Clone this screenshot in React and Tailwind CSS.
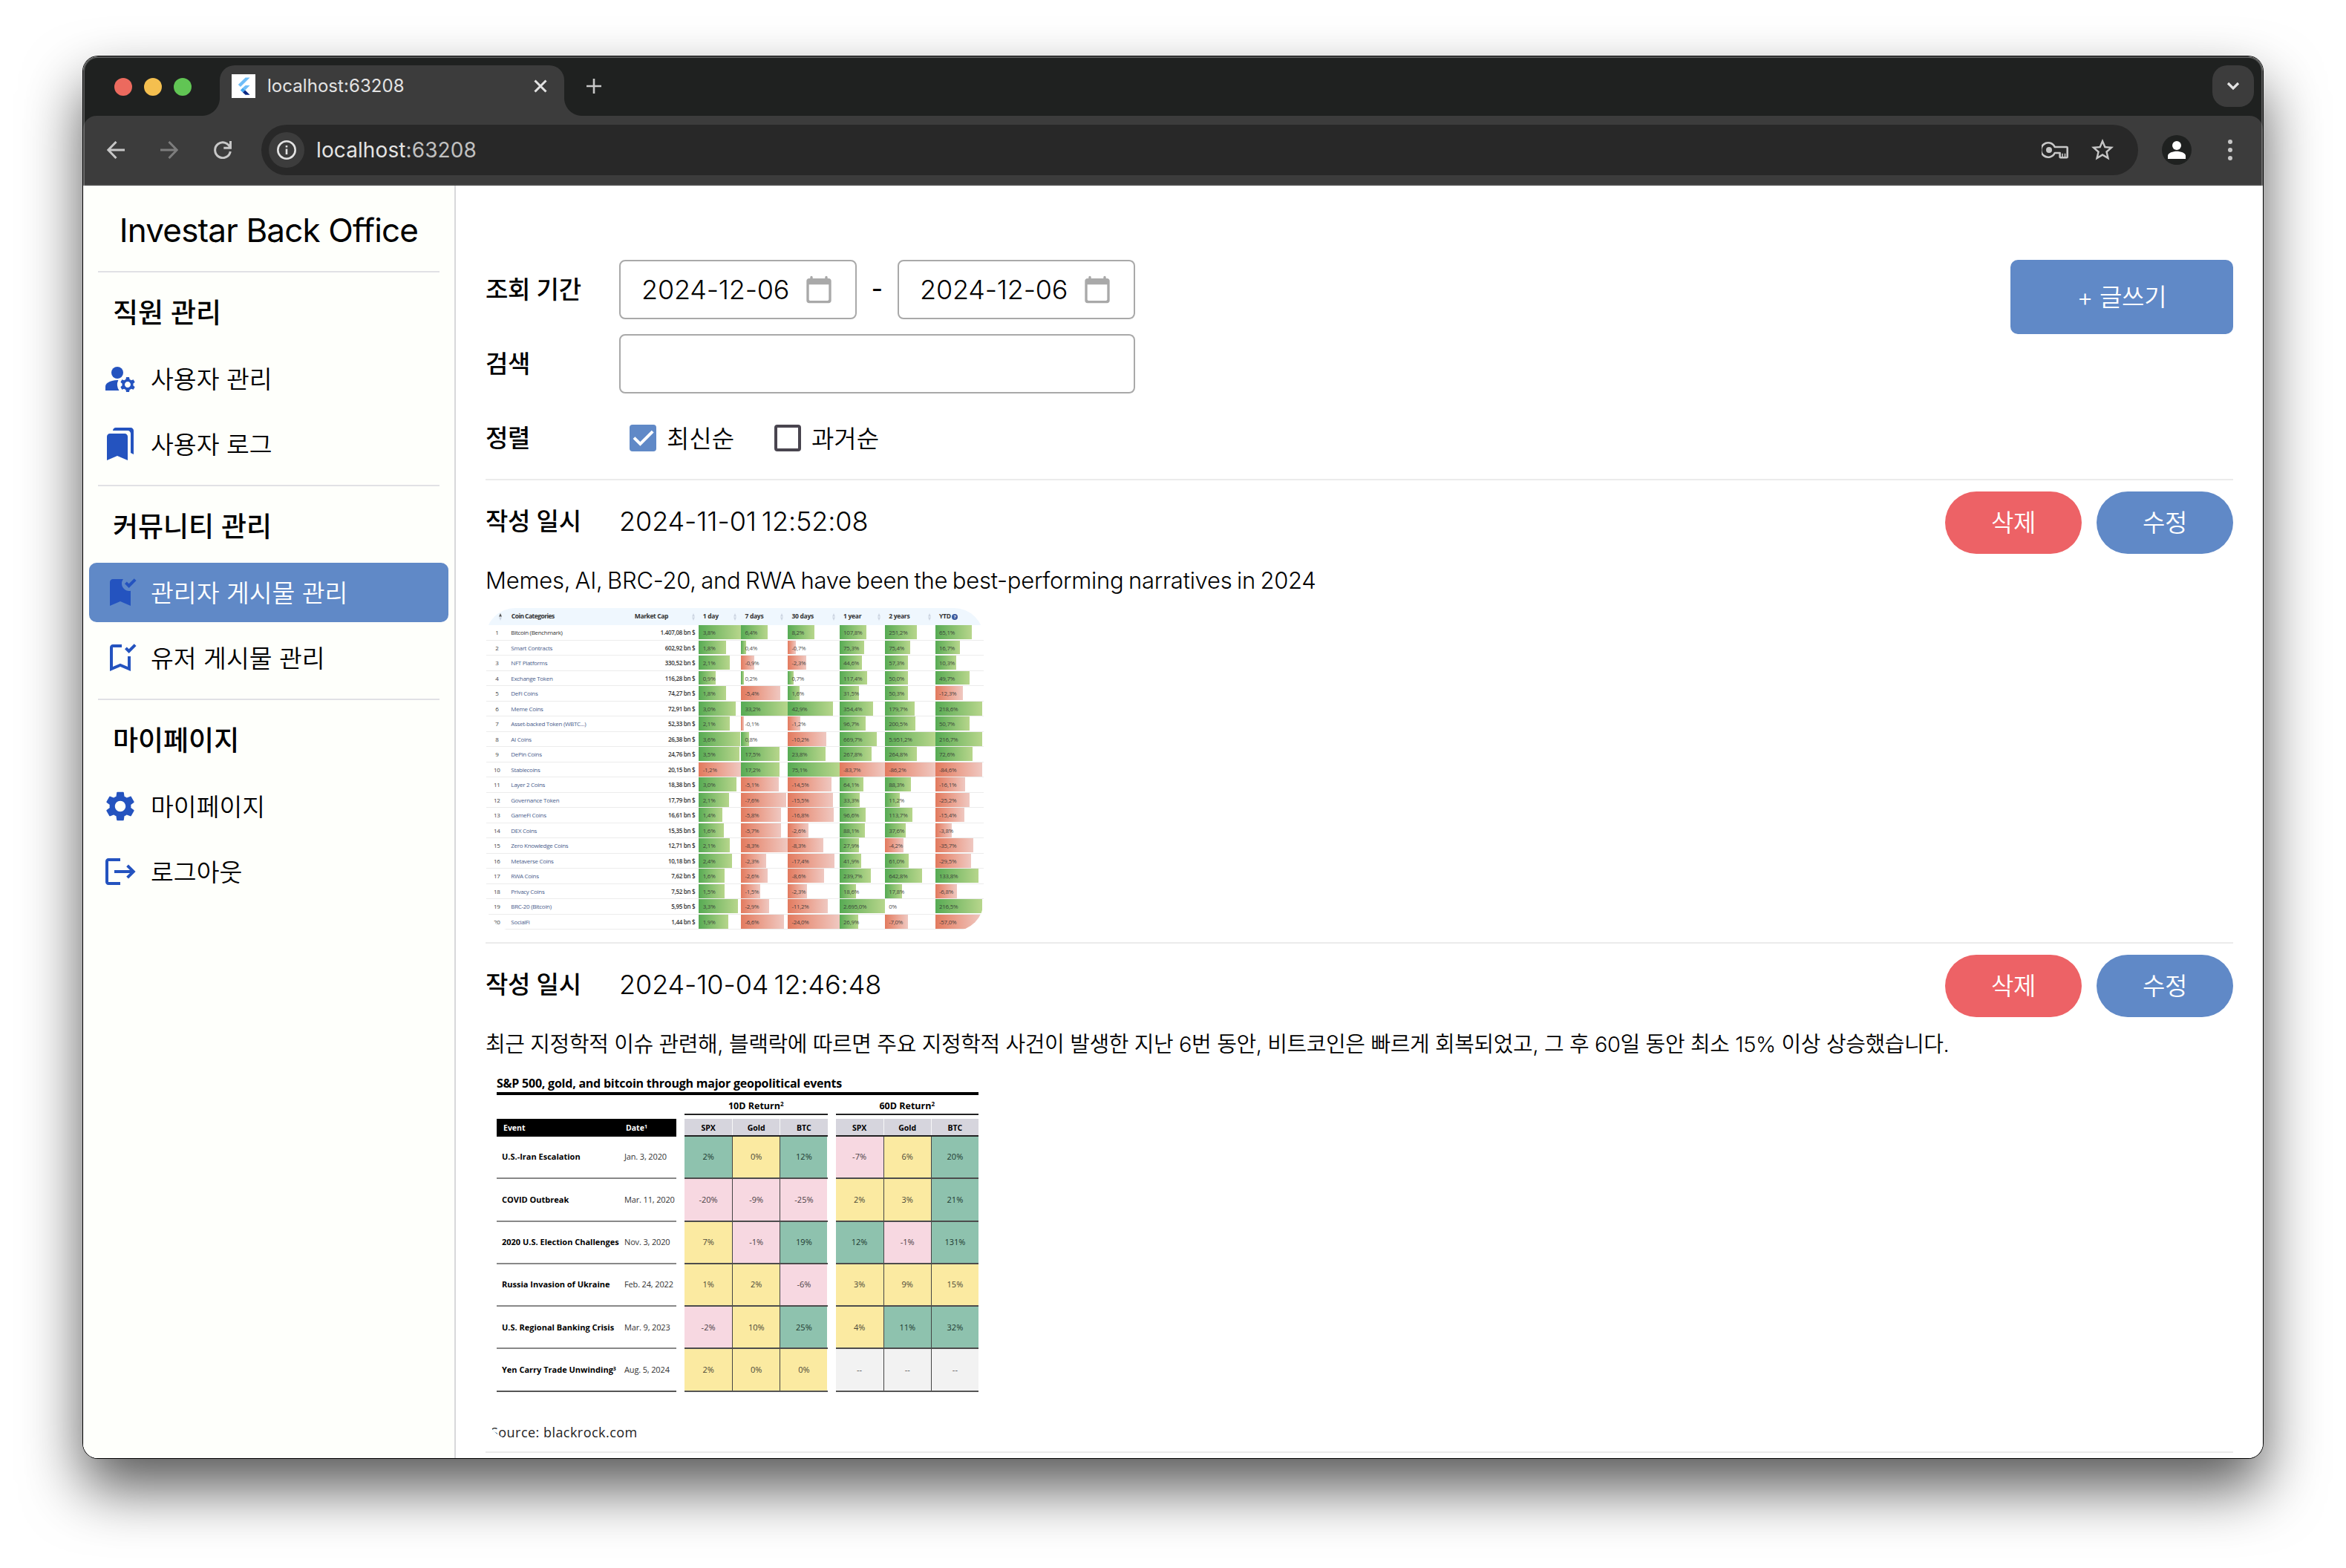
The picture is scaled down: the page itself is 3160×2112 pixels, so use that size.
import React from "react";

function Svg({ className, d, children, viewBox = "0 0 24 24" }) {
  return (
    <svg viewBox={viewBox} className={className} fill="currentColor" aria-hidden="true">
      {d ? <path d={d} /> : children}
    </svg>
  );
}

const ICONS = {
  bookmarks:
    "M19 18l2 1V3c0-1.1-.9-2-2-2H8.99C7.89 1 7 1.9 7 3h10c1.1 0 2 .9 2 2v13zM15 5H5c-1.1 0-2 .9-2 2v16l7-3 7 3V7c0-1.1-.9-2-2-2z",
  bookmarkAdded:
    "M19 21l-7-3-7 3V5c0-1.1.9-2 2-2h7c-.63.84-1 1.87-1 3 0 2.76 2.24 5 5 5 .34 0 .68-.03 1-.1V21zM17.83 9L15 6.17l1.41-1.41 1.41 1.41 3.54-3.54 1.41 1.41L17.83 9z",
  bookmarkAddedOutline:
    "M17 11v6.97l-5-2.14-5 2.14V5h6V3H7c-1.1 0-2 .9-2 2v16l7-3 7 3V11h-2zm.83-2L15 6.17l1.41-1.41 1.41 1.41 3.54-3.54 1.41 1.41L17.83 9z",
  settings:
    "M19.14 12.94c.04-.3.06-.61.06-.94 0-.32-.02-.64-.07-.94l2.03-1.58c.18-.14.23-.41.12-.61l-1.92-3.32c-.12-.22-.37-.29-.59-.22l-2.39.96c-.5-.38-1.03-.7-1.62-.94l-.36-2.54c-.04-.24-.24-.41-.48-.41h-3.84c-.24 0-.43.17-.47.41l-.36 2.54c-.59.24-1.13.57-1.62.94l-2.39-.96c-.22-.08-.47 0-.59.22L2.74 8.87c-.12.21-.08.47.12.61l2.03 1.58c-.05.3-.09.63-.09.94s.02.64.07.94l-2.03 1.58c-.18.14-.23.41-.12.61l1.92 3.32c.12.22.37.29.59.22l2.39-.96c.5.38 1.03.7 1.62.94l.36 2.54c.05.24.24.41.48.41h3.84c.24 0 .44-.17.47-.41l.36-2.54c.59-.24 1.13-.56 1.62-.94l2.39.96c.22.08.47 0 .59-.22l1.92-3.32c.12-.22.07-.47-.12-.61l-2.01-1.58zM12 15.6c-1.98 0-3.6-1.62-3.6-3.6s1.62-3.6 3.6-3.6 3.6 1.62 3.6 3.6-1.62 3.6-3.6 3.6z",
  calendar:
    "M20 3h-1V2c0-.55-.45-1-1-1s-1 .45-1 1v1H7V2c0-.55-.45-1-1-1s-1 .45-1 1v1H4c-1.1 0-2 .9-2 2v16c0 1.1.9 2 2 2h16c1.1 0 2-.9 2-2V5c0-1.1-.9-2-2-2zm-1 18H5c-.55 0-1-.45-1-1V8h16v12c0 .55-.45 1-1 1z",
  star: "M22 9.24l-7.19-.62L12 2 9.19 8.63 2 9.24l5.46 4.73L5.82 21 12 17.27 18.18 21l-1.63-7.03L22 9.24zM12 15.4l-3.76 2.27 1-4.28-3.32-2.88 4.38-.38L12 6.1l1.71 4.04 4.38.38-3.32 2.88 1 4.28L12 15.4z",
};

function ManageAccounts({ className }) {
  return (
    <Svg className={className}>
      <circle cx="10" cy="8" r="4" />
      <path d="M10.67 13.02c-.22-.01-.44-.02-.67-.02-2.42 0-4.68.67-6.61 1.82-.88.52-1.39 1.5-1.39 2.53V20h9.26a6.963 6.963 0 0 1-.59-6.98z" />
      <path d="M20.75 16c0-.22-.03-.42-.06-.63l1.14-1.01-1-1.73-1.45.49c-.32-.27-.68-.48-1.08-.63L18 11h-2l-.3 1.49c-.4.15-.76.36-1.08.63l-1.45-.49-1 1.73 1.14 1.01c-.03.21-.06.41-.06.63s.03.42.06.63l-1.14 1.01 1 1.73 1.45-.49c.32.27.68.48 1.08.63L16 21h2l.3-1.49c.4-.15.76-.36 1.08-.63l1.45.49 1-1.73-1.14-1.01c.03-.21.06-.41.06-.63zM17 18c-1.1 0-2-.9-2-2s.9-2 2-2 2 .9 2 2-.9 2-2 2z" />
    </Svg>
  );
}

function Logout({ className }) {
  return (
    <Svg className={className}>
      <path d="M12 3H4c-1.1 0-2 .9-2 2v14c0 1.1.9 2 2 2h8v-2H4V5h8z" />
      <path d="M17.5 7.2l-1.4 1.4 2.4 2.4H8v2h10.5l-2.4 2.4 1.4 1.4 4.8-4.8z" />
    </Svg>
  );
}

function FlutterMark() {
  return (
    <div className="size-8 bg-white flex items-center justify-center">
      <svg viewBox="0 0 32 32" className="size-8" aria-hidden="true">
        <path d="M18.6 3.5h6L12 16.1l-3.2-3.1z" fill="#6fbdf7" transform="translate(0 1)" />
        <path d="M18.6 15h6l-6.4 6.4-3.3-3.2z" fill="#6fbdf7" />
        <path d="M11.8 21.4l3.2-3.2 3.2 3.2-3.2 3.2z" fill="#41a5ee" />
        <path d="M15 24.6l3.2-3.2 6.4 6.4h-6z" fill="#0b2a86" />
      </svg>
    </div>
  );
}

/* ---------- browser chrome ---------- */

function TabStrip() {
  return (
    <div className="h-20 flex items-start bg-[#1f2120] pl-[42px] pr-3">
      <div className="mt-[29px] flex gap-4">
        <span className="size-6 rounded-full bg-[#ec6a5e]" />
        <span className="size-6 rounded-full bg-[#f4bf4f]" />
        <span className="size-6 rounded-full bg-[#61c554]" />
      </div>
      <div className="ml-[14px] mt-14 size-6 bg-[radial-gradient(circle_at_0_0,transparent_23.5px,#3c3c3c_24.5px)]" />
      <div className="mt-3 flex h-[68px] w-[464px] items-start rounded-t-[20px] bg-[#3c3c3c] pl-4 pr-[20px] pt-3">
        <FlutterMark />
        <span className="ml-[16px] text-[24px] leading-[31px] tracking-[0.05px] text-[#e3e3e3]">localhost:63208</span>
        <svg viewBox="0 0 24 24" className="ml-auto mt-[4px] size-6" stroke="#e3e3e3" strokeWidth="3" aria-hidden="true">
          <path d="M4.5 4.5l15 15M19.5 4.5l-15 15" />
        </svg>
      </div>
      <div className="mt-14 size-6 bg-[radial-gradient(circle_at_100%_0,transparent_23.5px,#3c3c3c_24.5px)]" />
      <svg viewBox="0 0 24 24" className="ml-1 mt-[28px] size-6" stroke="#c7c7c7" strokeWidth="2.6" aria-hidden="true">
        <path d="M12 2v20M2 12h20" />
      </svg>
      <div className="ml-auto mt-3 flex size-14 items-center justify-center rounded-[20px] bg-[#3c3c3c]">
        <svg viewBox="0 0 24 24" className="size-6" fill="none" stroke="#e3e3e3" strokeWidth="3.2" aria-hidden="true">
          <path d="M5 8l7 7 7-7" />
        </svg>
      </div>
    </div>
  );
}

function Toolbar() {
  return (
    <div className="bg-[#1f2120]">
      <div className="flex h-[94px] items-start rounded-t-[18px] border-b-2 border-[#474747] bg-[#3c3c3c] pl-8 pr-[38px] pt-3">
        <svg viewBox="0 0 24 24" className="mt-[22px] size-6" fill="none" stroke="#c7c7c7" strokeWidth="3" aria-hidden="true">
          <path d="M12.5 1L1.8 12l10.7 11M2 12h22" />
        </svg>
        <svg viewBox="0 0 24 24" className="ml-[48px] mt-[22px] size-6" fill="none" stroke="#7d7d7d" strokeWidth="3" aria-hidden="true">
          <path d="M11.5 1l10.7 11-10.7 11M22 12H0" />
        </svg>
        <svg viewBox="0 0 24 24" className="ml-[48px] mt-[22px] size-6" fill="none" stroke="#c7c7c7" strokeWidth="3" aria-hidden="true">
          <path d="M22 9.2A10.4 10.4 0 1 0 22.3 14M22.5 0v9.3h-9.2" />
        </svg>
        <div className="ml-[40px] flex h-[68px] w-[2528px] items-center rounded-full bg-[#282828] pl-[10px] pr-[30px]">
          <span className="flex size-12 items-center justify-center rounded-full bg-[#3c3c3c]">
            <svg viewBox="0 0 28 28" className="size-7" fill="none" stroke="#e3e3e3" strokeWidth="2.6" aria-hidden="true">
              <circle cx="14" cy="14" r="11.7" />
              <path d="M14 12.6v7.4M14 8v2.6" />
            </svg>
          </span>
          <span className="ml-[16px] text-[28px] tracking-[0.1px] text-[#e3e3e3]">
            localhost<span className="text-[#c0c0c0]">:63208</span>
          </span>
          <svg viewBox="0 0 36 24" className="ml-auto h-6 w-9" fill="none" stroke="#c7c7c7" strokeWidth="2.6" aria-hidden="true">
            <path d="M17.7 8A9.7 9.7 0 1 0 17.7 16H24.6V21.3Q24.6 22.3 25.6 22.3H33.7Q34.7 22.3 34.7 21.3V9Q34.7 8 33.7 8Z" strokeLinejoin="round" />
            <circle cx="10" cy="12" r="4" fill="#c7c7c7" stroke="none" />
            <path d="M28 21.5v-4.8M31.5 21.5v-4.8" strokeWidth="1.6" />
          </svg>
          <Svg className="ml-[28px] size-9 text-[#c7c7c7]" d={ICONS.star} />
        </div>
        <span className="ml-[32px] mt-[14px] flex size-10 items-center justify-center rounded-full bg-[#1f2120]">
          <svg viewBox="0 0 24 24" className="size-6" fill="#fff" aria-hidden="true">
            <circle cx="12" cy="6" r="6" />
            <path d="M0 24v-4.2C0 16 7 13.8 12 13.8S24 16 24 19.8V24z" />
          </svg>
        </span>
        <span className="ml-auto mt-[20px] flex h-7 w-[12px] flex-col items-center justify-between">
          <i className="size-[6px] rounded-full bg-[#c7c7c7]" />
          <i className="size-[6px] rounded-full bg-[#c7c7c7]" />
          <i className="size-[6px] rounded-full bg-[#c7c7c7]" />
        </span>
      </div>
    </div>
  );
}

/* ---------- sidebar ---------- */

const MENU = [
  {
    title: "직원 관리",
    items: [
      { label: "사용자 관리", icon: <ManageAccounts className="size-12" /> },
      { label: "사용자 로그", icon: <Svg className="size-12" d={ICONS.bookmarks} /> },
    ],
  },
  {
    title: "커뮤니티 관리",
    items: [
      { label: "관리자 게시물 관리", icon: <Svg className="size-12" d={ICONS.bookmarkAdded} />, active: true },
      { label: "유저 게시물 관리", icon: <Svg className="size-12" d={ICONS.bookmarkAddedOutline} /> },
    ],
  },
  {
    title: "마이페이지",
    items: [
      { label: "마이페이지", icon: <Svg className="size-12" d={ICONS.settings} /> },
      { label: "로그아웃", icon: <Logout className="size-12" /> },
    ],
  },
];

function Sidebar() {
  return (
    <aside className="w-[502px] shrink-0 border-r-2 border-[#d7d8da] bg-[#fefffb] text-black">
      <h1 className="flex h-[115px] items-center justify-center pt-[5px] text-[44px] font-normal tracking-[-0.85px]">
        <span>Investar Back Office</span>
      </h1>
      {MENU.map((group) => (
        <section key={group.title} className="h-[288px]">
          <div className="ml-5 mr-5 h-[2px] bg-[#e1e1e5]" />
          <h2 className="flex h-[103px] items-center pl-10 pt-[7px] text-[37px] font-medium">{group.title}</h2>
          <ul className="flex flex-col gap-2 px-2">
            {group.items.map((item) => (
              <li
                key={item.label}
                className={
                  "flex h-20 items-center gap-[17px] rounded-[10px] pl-[18px] text-[33.5px] font-[350] " +
                  (item.active ? "bg-[#6089c7] text-white" : "")
                }
              >
                <span className="text-[#2453bf]">{item.icon}</span>
                <span className="pt-[3px]">{item.label}</span>
              </li>
            ))}
          </ul>
        </section>
      ))}
    </aside>
  );
}

/* ---------- filters ---------- */

function DateField({ value }) {
  return (
    <div className="flex h-20 w-80 items-center rounded-lg border-2 border-[#a9a9a9] pl-[28px]">
      <span className="w-[219px] text-[36px] font-[260] tracking-[-0.2px]">{value}</span>
      <Svg className="size-10 text-[#a9a9a9]" d={ICONS.calendar} />
    </div>
  );
}

function FilterLabel({ children }) {
  return <span className="w-[180px] shrink-0 pt-[2px] text-[33px] font-medium tracking-[-0.3px]">{children}</span>;
}

function Filters() {
  return (
    <div className="flex h-[295px] justify-between">
      <div className="flex flex-col gap-5">
        <div className="flex h-20 items-center">
          <FilterLabel>조회 기간</FilterLabel>
          <DateField value="2024-12-06" />
          <span className="w-[55px] text-center text-[33px] font-medium">-</span>
          <DateField value="2024-12-06" />
        </div>
        <div className="flex h-20 items-center">
          <FilterLabel>검색</FilterLabel>
          <div className="h-20 w-[695px] rounded-lg border-2 border-[#a9a9a9]" />
        </div>
        <div className="flex h-20 items-center text-[33px] font-[350]">
          <FilterLabel>정렬</FilterLabel>
          <span className="ml-[14px] flex size-9 items-center justify-center rounded-[4px] bg-[#6089c7]">
            <svg viewBox="0 0 36 36" className="size-9" fill="none" stroke="#fff" strokeWidth="4" aria-hidden="true">
              <path d="M6 17.6l8.4 8.4L31.2 9.2" />
            </svg>
          </span>
          <span className="ml-[14px] w-[145px] pt-[3px]">최신순</span>
          <span className="size-9 rounded-[4px] border-4 border-[#49454f]" />
          <span className="ml-[14px] pt-[3px]">과거순</span>
        </div>
      </div>
      <button className="h-[100px] w-[300px] rounded-[10px] bg-[#6089c7] pt-[2px] text-[33px] font-[350] tracking-[-0.3px] text-white">
        + 글쓰기
      </button>
    </div>
  );
}

/* ---------- coin category table ---------- */

const PERIOD_COLUMNS = [
  { label: "1 day", cell: "w-[56.7px]", span: 127 },
  { label: "7 days", cell: "w-[63px]", span: 141 },
  { label: "30 days", cell: "w-[69.6px]", span: 156 },
  { label: "1 year", cell: "w-[61.2px]", span: 137 },
  { label: "2 years", cell: "w-[67.8px]", span: 152 },
  { label: "YTD", cell: "w-[63.4px]", span: 142 },
];

// Each row: name, market cap, then [value, bar length] for every period.
const COINS = [
  ["Bitcoin (Benchmark)", "1.407,08", ["3,8", 127], ["6,4", 81], ["8,2", 80], ["107,8", 81], ["251,2", 97], ["65,1", 111]],
  ["Smart Contracts", "602,92", ["1,8", 83], ["0,4", 15], ["-0,7", 24], ["75,3", 75], ["75,4", 76], ["16,7", 76]],
  ["NFT Platforms", "330,52", ["2,1", 93], ["-0,9", 40], ["-2,3", 57], ["44,6", 67], ["57,3", 71], ["10,3", 64]],
  ["Exchange Token", "116,28", ["0,9", 51], ["0,2", 9], ["0,7", 19], ["117,4", 83], ["50,0", 69], ["49,7", 104]],
  ["DeFi Coins", "74,27", ["1,8", 82], ["-5,4", 118], ["1,6", 35], ["31,5", 60], ["50,3", 69], ["-12,3", 83]],
  ["Meme Coins", "72,91", ["3,0", 112], ["33,2", 141], ["42,9", 137], ["354,4", 102], ["179,7", 91], ["218,6", 142]],
  ["Asset-backed Token (WBTC...)", "52,33", ["2,1", 93], ["-0,1", 8], ["-1,2", 39], ["96,7", 79], ["200,5", 92], ["50,7", 104]],
  ["AI Coins", "26,38", ["3,6", 125], ["0,8", 25], ["-10,2", 117], ["669,7", 113], ["5.951,2", 152], ["216,7", 142]],
  ["DePin Coins", "24,76", ["3,5", 123], ["17,5", 116], ["23,8", 114], ["267,8", 97], ["264,8", 97], ["72,6", 113]],
  ["Stablecoins", "20,15", ["-1,2", 127], ["17,2", 116], ["75,1", 156], ["-83,7", 137], ["-86,2", 152], ["-84,6", 142]],
  ["Layer 2 Coins", "18,38", ["3,0", 113], ["-5,1", 114], ["-14,5", 132], ["64,1", 72], ["88,3", 79], ["-16,1", 90]],
  ["Governance Token", "17,79", ["2,1", 91], ["-7,6", 137], ["-15,5", 136], ["33,3", 61], ["11,2", 45], ["-25,2", 104]],
  ["GameFi Coins", "16,61", ["1,4", 71], ["-5,8", 121], ["-16,8", 140], ["96,6", 79], ["113,7", 83], ["-15,4", 89]],
  ["DEX Coins", "15,35", ["1,6", 76], ["-5,7", 121], ["-2,6", 62], ["88,1", 78], ["37,6", 64], ["-3,8", 50]],
  ["Zero Knowledge Coins", "12,71", ["2,1", 93], ["-8,3", 141], ["-8,3", 108], ["27,9", 59], ["-4,2", 56], ["-35,7", 115]],
  ["Metaverse Coins", "10,18", ["2,4", 100], ["-2,3", 76], ["-17,4", 141], ["41,9", 66], ["61,0", 72], ["-29,5", 109]],
  ["RWA Coins", "7,62", ["1,6", 77], ["-2,6", 81], ["-8,6", 110], ["239,7", 95], ["642,8", 112], ["133,8", 130]],
  ["Privacy Coins", "7,52", ["1,5", 77], ["-1,5", 59], ["-2,3", 58], ["18,6", 51], ["17,8", 52], ["-6,8", 66]],
  ["BRC-20 (Bitcoin)", "5,95", ["3,3", 118], ["-2,9", 86], ["-11,2", 121], ["2.695,0", 137], ["0", 0], ["216,5", 142]],
  ["SocialFi", "1,44", ["1,9", 88], ["-6,6", 129], ["-24,0", 156], ["26,9", 58], ["-7,0", 71], ["-57,0", 142]],
];

function SortMark({ className = "text-[#cdd6e2]" }) {
  return (
    <svg viewBox="0 0 4 10" className={"h-[10px] w-1 " + className} fill="currentColor" aria-hidden="true">
      <path d="M2 0l2 4.5H0z" />
      <path d="M2 10l2-4.5H0z" className="text-[#cdd6e2]" fill="currentColor" />
    </svg>
  );
}

function PeriodCell({ col, value, length }) {
  const tone = value.startsWith("-") ? "from-[#e27a5e] to-[#efc8c1]" : "from-[#56ab54] to-[#b7d68c]";
  return (
    <div className={"relative h-full shrink-0 " + col.cell}>
      <div
        className={"absolute top-0 bottom-[0.6px] left-0 bg-linear-to-r " + tone}
        style={{ width: `${(length / col.span) * 100}%` }}
      />
      <span className="relative pl-[5.5px] text-[#333]/90">{value}%</span>
    </div>
  );
}

function CoinTable() {
  return (
    <div className="h-[435px] w-[671px] overflow-hidden rounded-[40px] pl-[1.3px] font-['Open_Sans',sans-serif] text-[8px] tracking-[-0.3px]">
      <div className="flex h-[23px] items-center bg-[#eff7fe] font-bold text-[#333]">
        <div className="flex w-[286px] items-center">
          <SortMark className="ml-[17px] text-[#555]" />
          <span className="ml-[12.5px] w-[166px] text-[8.5px] tracking-[-0.55px]">Coin Categories</span>
          <span className="w-[77px] text-[8.5px] tracking-[-0.4px]">Market Cap</span>
          <SortMark />
        </div>
        {PERIOD_COLUMNS.map((col) => (
          <div key={col.label} className={"flex shrink-0 items-center justify-between pl-[5.5px] pr-[6px] text-[8.5px] " + col.cell}>
            <span>{col.label}</span>
            {col.label === "YTD" ? (
              <span className="mr-[27px] flex size-[8px] items-center justify-center rounded-full bg-[#3b5a9d] text-[6px] leading-none text-white">?</span>
            ) : (
              <SortMark />
            )}
          </div>
        ))}
      </div>
      {COINS.map(([name, cap, ...periods], i) => (
        <div key={name} className="flex h-[20.53px] border-b border-[#ececec] leading-[20px]">
          <span className="w-[28px] shrink-0 text-center text-[#444]">{i + 1}</span>
          <span className={"w-[158px] shrink-0 pl-[5px] " + (i === 0 ? "text-[#333]" : "text-[#4a5d8c]")}>{name}</span>
          <span className="w-[100px] shrink-0 pr-[5px] text-right font-semibold text-[#333]">{cap} bn $</span>
          {PERIOD_COLUMNS.map((col, c) => (
            <PeriodCell key={col.label} col={col} value={periods[c][0]} length={periods[c][1]} />
          ))}
        </div>
      ))}
    </div>
  );
}

/* ---------- geopolitical events table ---------- */

const TONES = {
  g: "bg-[#8ec2ae] text-[#20372f]",
  y: "bg-[#fbeaa1] text-[#4a4738]",
  p: "bg-[#f7d8e1] text-[#4a4145]",
  n: "bg-[#f2f2f2] text-[#555]",
};

const EVENTS = [
  { name: "U.S.-Iran Escalation", date: "Jan. 3, 2020", d10: ["g2%", "y0%", "g12%"], d60: ["p-7%", "y6%", "g20%"] },
  { name: "COVID Outbreak", date: "Mar. 11, 2020", d10: ["p-20%", "p-9%", "p-25%"], d60: ["y2%", "y3%", "g21%"] },
  { name: "2020 U.S. Election Challenges", date: "Nov. 3, 2020", d10: ["y7%", "p-1%", "g19%"], d60: ["g12%", "p-1%", "g131%"] },
  { name: "Russia Invasion of Ukraine", date: "Feb. 24, 2022", d10: ["y1%", "y2%", "p-6%"], d60: ["y3%", "y9%", "y15%"] },
  { name: "U.S. Regional Banking Crisis", date: "Mar. 9, 2023", d10: ["p-2%", "y10%", "g25%"], d60: ["y4%", "g11%", "g32%"] },
  { name: "Yen Carry Trade Unwinding", note: "3", date: "Aug. 5, 2024", d10: ["y2%", "y0%", "y0%"], d60: ["n--", "n--", "n--"] },
];

function ReturnGroup({ title, field }) {
  return (
    <div className="w-[192.5px]">
      <div className="flex h-[27px] items-center justify-center border-b-2 border-[#222] pt-[5px] text-[12.5px] font-bold">
        <span>
          {title}
          <sup className="top-[-0.5em] text-[8px]">2</sup>
        </span>
      </div>
      <div className="mt-[5px] grid h-[24px] grid-cols-3 border-b-2 border-[#222] bg-[#d6d5dd] text-[10.5px] font-bold">
        {["SPX", "Gold", "BTC"].map((h, i) => (
          <span key={h} className={"flex items-center justify-center pt-[3px] " + (i ? "border-l border-white/80" : "")}>
            {h}
          </span>
        ))}
      </div>
      {EVENTS.map((event, r) => (
        <div
          key={event.name}
          className={"grid h-[57.3px] grid-cols-3 border-b-2 text-[11px] font-medium " + (r === 5 ? "border-[#555]" : "border-[#4c4c4c]")}
        >
          {event[field].map((cell, i) => (
            <span
              key={i}
              className={"flex items-center justify-center " + TONES[cell[0]] + (i ? " border-l-[1.5px] border-[#444]" : "")}
            >
              {cell.slice(1)}
            </span>
          ))}
        </div>
      ))}
    </div>
  );
}

function EventsTable() {
  return (
    <div className="h-[497px] w-[671px] overflow-hidden rounded-[40px] bg-white font-['Open_Sans',sans-serif] text-black">
      <div className="ml-[15px] w-[649px]">
        <div className="h-[32px] border-b-4 border-black pt-[5px] text-[16px] leading-[22px] font-bold tracking-[-0.23px]">
          S&amp;P 500, gold, and bitcoin through major geopolitical events
        </div>
        <div className="flex justify-between">
          <div className="w-[242px] pt-[32px]">
            <div className="flex h-[24px] items-center bg-black pl-[9px] pt-[2px] text-[10.5px] font-bold text-white">
              <span className="w-[165px]">Event</span>
              <span>
                Date<sup className="top-[-0.4em] text-[7px]">1</sup>
              </span>
            </div>
            {EVENTS.map((event, r) => (
              <div
                key={event.name}
                className={"flex h-[57.3px] items-center border-b-2 pl-[7px] text-[11px] " + (r === 5 ? "border-[#555]" : "border-[#888]")}
              >
                <span className="w-[165px] font-bold whitespace-nowrap">
                  {event.name}
                  {event.note && <sup className="top-[-0.4em] text-[7px]">{event.note}</sup>}
                </span>
                <span className="tracking-[-0.15px] whitespace-nowrap text-[#333]">{event.date}</span>
              </div>
            ))}
          </div>
          <div className="flex gap-[11px]">
            <ReturnGroup title="10D Return" field="d10" />
            <ReturnGroup title="60D Return" field="d60" />
          </div>
        </div>
      </div>
      <div className="pt-[41px] pl-[7px] text-[18px] leading-[26px] font-medium tracking-[0.46px] text-[#222]">Source: blackrock.com</div>
    </div>
  );
}

/* ---------- posts ---------- */

function Post({ date, body, bodyClass, children }) {
  return (
    <article className="border-t-2 border-[#ebebeb] pt-[15px] pb-[15px]">
      <div className="flex h-[84px] items-center">
        <div className="flex items-center pb-1">
          <FilterLabel>작성 일시</FilterLabel>
          <span className="text-[36px] font-[260] tracking-[-0.1px] [word-spacing:-3px]">{date}</span>
        </div>
        <div className="ml-auto flex gap-5 text-[33px] font-[350] tracking-[-0.4px] text-white">
          <button className="h-[84px] w-[184px] rounded-full bg-[#ed6266] pt-[2px]">삭제</button>
          <button className="h-[84px] w-[184px] rounded-full bg-[#6089c7] pt-[2px]">수정</button>
        </div>
      </div>
      <p className={"flex h-[73px] items-center whitespace-nowrap " + bodyClass}>{body}</p>
      {children}
    </article>
  );
}

export default function App() {
  return (
    <div className="h-[2112px] w-[3160px] overflow-hidden bg-white pt-[76px] pl-[112px] font-['Inter','Noto_Sans_CJK_KR',sans-serif] text-black">
      <div className="relative h-[1888px] w-[2936px] rounded-[20px] shadow-[0_0_0_1px_#000,0_40px_80px_rgba(0,0,0,0.66)]">
        <div className="flex h-full flex-col overflow-hidden rounded-[20px] bg-white">
          <TabStrip />
          <Toolbar />
          <div className="flex min-h-0 flex-1">
            <Sidebar />
            <main className="min-w-0 flex-1 px-10 pt-[100px]">
              <Filters />
              <Post
                date="2024-11-01 12:52:08"
                body="Memes, AI, BRC-20, and RWA have been the best-performing narratives in 2024"
                bodyClass="text-[31px] font-[260] tracking-[-0.25px] [word-spacing:-2px]"
              >
                <CoinTable />
              </Post>
              <Post
                date="2024-10-04 12:46:48"
                body="최근 지정학적 이슈 관련해, 블랙락에 따르면 주요 지정학적 사건이 발생한 지난 6번 동안, 비트코인은 빠르게 회복되었고, 그 후 60일 동안 최소 15% 이상 상승했습니다."
                bodyClass="text-[29px] font-[350] tracking-[-0.4px]"
              >
                <EventsTable />
              </Post>
              <div className="h-[2px] bg-[#ebebeb]" />
            </main>
          </div>
        </div>
        <div className="pointer-events-none absolute inset-x-0 top-0 h-[174px] rounded-t-[20px] border-x-2 border-t-2 border-white/25" />
      </div>
    </div>
  );
}
